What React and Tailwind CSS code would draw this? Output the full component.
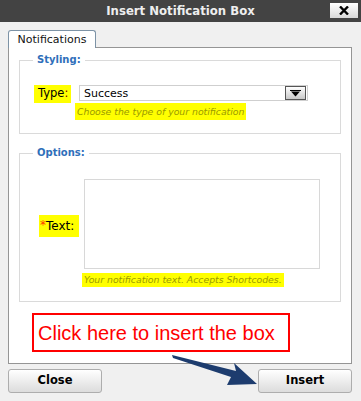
import React from 'react';

const HelpText = ({ children, className = '' }) => (
  <div className={`w-fit whitespace-nowrap bg-[#ffff00] text-[#9a9a00] italic text-[9.3px] leading-none flex items-center px-[2px] ${className}`}>
    {children}
  </div>
);

const Legend = ({ children }) => (
  <legend className="ml-[13px] px-[4px] text-[10px] leading-[14px] font-bold text-[#2f6fba]">{children}</legend>
);

export default function App() {
  return (
    <div className="relative w-[361px] h-[401px] overflow-hidden bg-[#f0f0f0] text-black font-['DejaVu_Sans',Verdana,sans-serif]">
      {/* title bar */}
      <div className="relative h-[22px] bg-[#434343] flex items-center justify-center">
        <span className="font-['DejaVu_Sans_Condensed','DejaVu_Sans',sans-serif] font-bold text-[13px] text-[#eeeeee]">
          Insert Notification Box
        </span>
        <button className="absolute right-[3px] top-[3px] w-[28px] h-[15px] flex items-center justify-center bg-gradient-to-b from-white to-[#d8d8d8]">
          <svg width="10" height="9" viewBox="0 0 10 9">
            <path d="M1 0.5 L9 8.5 M9 0.5 L1 8.5" stroke="#000" strokeWidth="2.4" />
          </svg>
        </button>
      </div>

      <div className="px-[8px] pt-[8px]">
        {/* tab */}
        <div className="relative z-10 -mb-px w-[88px] h-[18px] border border-b-0 border-[#7d93a6] rounded-t-[3px] bg-white flex items-center justify-center text-[11px] leading-none text-[#111]">
          Notifications
        </div>

        {/* panel */}
        <div className="w-[344px] h-[317px] border border-[#959595] bg-white px-[10px] pt-[5px]">
          {/* Styling */}
          <fieldset className="h-[81px] border border-[#dadada]">
            <Legend>Styling:</Legend>
            <div className="pl-[14px] pt-[18px]">
              <div className="flex items-start">
                <div className="w-[37px] h-[18px] bg-[#ffff00] flex items-center pl-[4px] text-[11.5px] leading-none">
                  Type<span className="text-[#7a0000]">:</span>
                </div>
                <div className="ml-[8px] w-[229px] h-[16px] border border-[#cfcfcf] flex items-center justify-between pl-[4px] pr-px text-[11px] leading-none">
                  <span>Success</span>
                  <span className="w-[21px] h-[14px] border border-[#555] bg-gradient-to-b from-white to-[#c8c8c8] flex items-center justify-center">
                    <svg width="11" height="7" viewBox="0 0 11 7">
                      <rect x="0" y="0" width="11" height="1" fill="#000" />
                      <path d="M1 1.5 L10 1.5 L5.5 6.5 Z" fill="#000" />
                    </svg>
                  </span>
                </div>
              </div>
              <HelpText className="ml-[41px] h-[17px]">Choose the type of your notification</HelpText>
            </div>
          </fieldset>

          {/* Options */}
          <fieldset className="mt-[12px] h-[156px] border border-[#dadada]">
            <Legend>Options:</Legend>
            <div className="pl-[19px] pt-[19px]">
              <div className="flex items-start">
                <div className="mt-[36px] w-[40px] h-[22px] bg-[#ffff00] flex items-center pl-[1px] text-[12px] leading-none">
                  <span className="text-[#ff3b00] self-start mt-[4px] text-[12px]">*</span>Text:
                </div>
                <textarea className="ml-[5px] w-[236px] h-[90px] border border-[#d8d8d8] resize-none outline-none" />
              </div>
              <HelpText className="mt-[4px] ml-[43px] h-[14px]">Your notification text. Accepts Shortcodes.</HelpText>
            </div>
          </fieldset>

          {/* callout */}
          <div className="mt-[11px] ml-[13px] w-[258px] h-[39px] border-2 border-[#ff0000] flex items-center pl-[4px] font-['Liberation_Sans',Arial,sans-serif] text-[20px] leading-none text-[#ff0000]">
            Click here to insert the box
          </div>
        </div>

        {/* buttons */}
        <div className="mt-[5px] w-[344px] flex justify-between">
          <button className="w-[94px] h-[24px] rounded-[3px] border border-[#adadad] bg-gradient-to-b from-white to-[#dcdcdc] text-[11.5px] font-bold leading-none">
            Close
          </button>
          <button className="w-[94px] h-[24px] rounded-[3px] border border-[#adadad] bg-gradient-to-b from-white to-[#dcdcdc] text-[11.5px] font-bold leading-none">
            Insert
          </button>
        </div>
      </div>

      {/* arrow */}
      <svg className="absolute left-0 top-0 pointer-events-none" width="361" height="401" viewBox="0 0 361 401">
        <polygon points="172,355 236,371 234,363 257,384 227,385 231,377 173,358" fill="#1d3c6e" />
      </svg>
    </div>
  );
}
